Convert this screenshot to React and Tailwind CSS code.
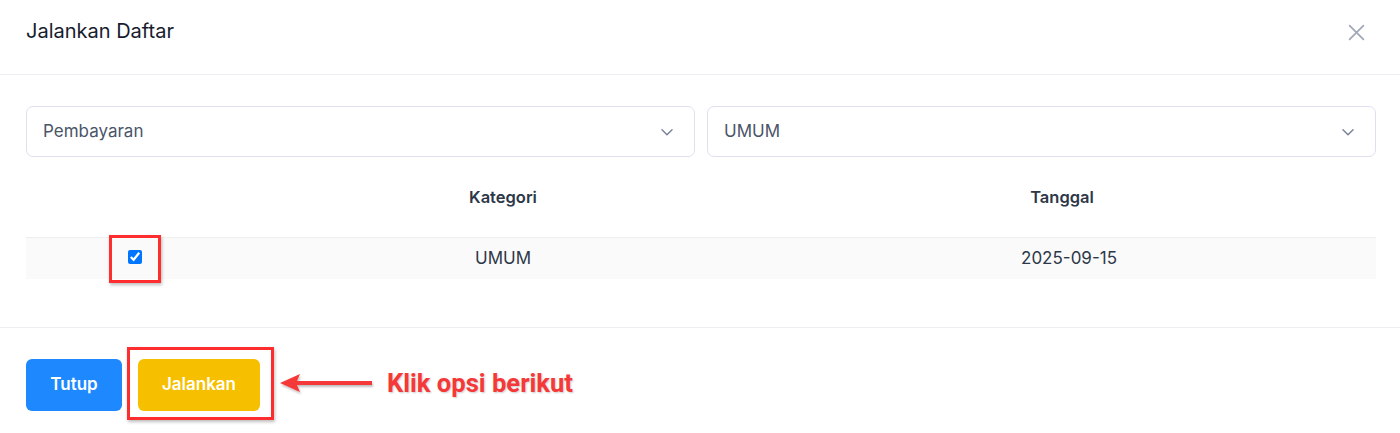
import React from "react";

function Chevron() {
  return (
    <svg width="22" height="22" viewBox="0 0 24 24" fill="none" stroke="#7a8399" strokeWidth="1.6" strokeLinecap="round" strokeLinejoin="round">
      <path d="M6.5 9.5l5.5 5.5 5.5-5.5" />
    </svg>
  );
}

function Select({ label }) {
  return (
    <div className="flex-1 h-[51px] rounded-[7px] border border-[#dfdff0] bg-white flex items-center justify-between pl-[16px] pr-[16px]">
      <span className="text-[17px] text-[#4a5568]">{label}</span>
      <Chevron />
    </div>
  );
}

export default function App() {
  return (
    <div className="relative w-[1400px] h-[433px] bg-white font-['Inter',sans-serif] overflow-hidden">
      {/* Header */}
      <div className="h-[75px] border-b border-[#eeeef2] pl-[26px] pr-[24px] flex items-start justify-between pt-[16px]">
        <h2 className="text-[20px] leading-[30px] text-[#171c2e]">Jalankan Daftar</h2>
        <svg className="mt-[8px] mr-[11px]" width="17" height="17" viewBox="0 0 16 16" fill="none" stroke="#a0a6b8" strokeWidth="1.6" strokeLinecap="round">
          <path d="M1.5 1.5l13 13M14.5 1.5l-13 13" />
        </svg>
      </div>

      {/* Body */}
      <div className="pl-[26px] pr-[24px] pt-[31px] pb-[48px] border-b border-[#eeeef2]">
        <div className="flex gap-[12px]">
          <Select label="Pembayaran" />
          <Select label="UMUM" />
        </div>
        <div className="grid grid-cols-[218px_518px_1fr] h-[80px] items-center text-[16.5px] font-semibold text-[#2d3748]">
          <div />
          <div className="text-center">Kategori</div>
          <div className="text-center pr-[14px]">Tanggal</div>
        </div>
        <div className="grid grid-cols-[218px_518px_1fr] h-[42px] items-center bg-[#fafafa] border-t border-[#eeeeee] text-[17px] text-[#2d3748]">
          <div className="flex justify-center">
            <input type="checkbox" checked readOnly className="w-[14px] h-[14px] mb-[4px]" />
          </div>
          <div className="text-center">UMUM</div>
          <div className="text-center">2025-09-15</div>
        </div>
      </div>

      {/* Footer */}
      <div className="px-[26px] pt-[31px] flex gap-[16px]">
        <button className="w-[96px] h-[52px] rounded-[6px] bg-[#1e88ff] text-white text-[17px] font-semibold">Tutup</button>
        <button className="w-[122px] h-[52px] rounded-[6px] bg-[#f6c000] text-white text-[17px] font-semibold">Jalankan</button>
      </div>

      {/* Annotations */}
      <div className="absolute left-[109px] top-[235px] w-[52px] h-[48px] border-[3px] border-[#ff2e2e] shadow-[1px_2px_3px_rgba(0,0,0,0.25)]" />
      <div className="absolute left-[127px] top-[347px] w-[147px] h-[73px] border-[3px] border-[#ff2e2e] shadow-[1px_2px_3px_rgba(0,0,0,0.25)]" />
      <svg className="absolute left-[276px] top-[370px]" width="100" height="28" viewBox="0 0 100 28">
        <defs>
          <filter id="sh" x="-10%" y="-30%" width="130%" height="170%">
            <feDropShadow dx="1" dy="2" stdDeviation="1" floodColor="#000" floodOpacity="0.25" />
          </filter>
        </defs>
        <g filter="url(#sh)">
          <path d="M4 13 L24 4 L21 11 L96 11 L96 15 L21 15 L24 22 Z" fill="#f53838" />
        </g>
      </svg>
      <div className="absolute left-[387px] top-[366px] text-[25.6px] leading-[34px] font-bold text-[#f53838] font-['Roboto',sans-serif] [text-shadow:1px_1px_2px_rgba(0,0,0,0.2)]">
        Klik opsi berikut
      </div>
    </div>
  );
}
